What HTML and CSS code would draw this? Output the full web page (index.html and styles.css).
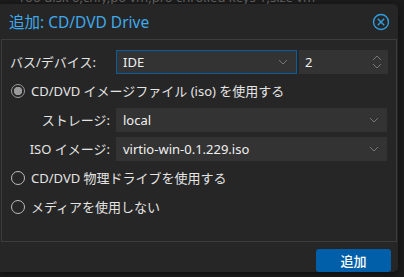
FILE: index.html
```html
<!DOCTYPE html>
<html lang="ja">

<head>
    <meta charset="UTF-8">
    <title>追加: CD/DVD Drive</title>
    <link rel="stylesheet" href="styles.css">
</head>

<body>
    <div class="backdrop"><div class="backdrop-text">roo disk 0,cnly,po vm,pro chrolled keys 1,size vm</div></div>
    <div class="dialog">
        <div class="header">
            <span class="title">追加: CD/DVD Drive</span>
            <span class="close">
                <svg width="18" height="18" viewBox="0 0 18 18">
                    <circle cx="9" cy="9" r="7.5" fill="none" stroke="#2f9fe0" stroke-width="1.4"/>
                    <path d="M5.8 5.8 L12.2 12.2 M12.2 5.8 L5.8 12.2" stroke="#2f9fe0" stroke-width="1.4"/>
                </svg>
            </span>
        </div>

        <div class="panel">
            <div class="row">
                <label class="label">バス/デバイス:</label>
                <div class="field select focused">
                    <span>IDE</span>
                    <svg class="chevron" width="10" height="6" viewBox="0 0 10 6"><path d="M1 1 L5 5 L9 1" fill="none" stroke="#777" stroke-width="1"/></svg>
                </div>
                <div class="field number">
                    <span>2</span>
                    <svg class="spin" width="10" height="16" viewBox="0 0 10 16"><path d="M1 6 L5 2 L9 6 M1 10 L5 14 L9 10" fill="none" stroke="#777" stroke-width="1"/></svg>
                </div>
            </div>

            <div class="radio-row">
                <span class="radio checked"></span>
                <span>CD/DVD イメージファイル (iso) を使用する</span>
            </div>

            <div class="row sub">
                <label class="label">ストレージ:</label>
                <div class="field select wide">
                    <span>local</span>
                    <svg class="chevron" width="10" height="6" viewBox="0 0 10 6"><path d="M1 1 L5 5 L9 1" fill="none" stroke="#777" stroke-width="1"/></svg>
                </div>
            </div>
            <div class="row sub">
                <label class="label">ISO イメージ:</label>
                <div class="field select wide">
                    <span>virtio-win-0.1.229.iso</span>
                    <svg class="chevron" width="10" height="6" viewBox="0 0 10 6"><path d="M1 1 L5 5 L9 1" fill="none" stroke="#777" stroke-width="1"/></svg>
                </div>
            </div>

            <div class="radio-row">
                <span class="radio"></span>
                <span>CD/DVD 物理ドライブを使用する</span>
            </div>
            <div class="radio-row">
                <span class="radio"></span>
                <span>メディアを使用しない</span>
            </div>
        </div>

        <div class="footer">
            <button class="add">追加</button>
        </div>
    </div>
</body>

</html>
```

FILE: styles.css
```css
body {
    margin: 0;
    background-color: #1b1b1b;
    font-family: "Noto Sans", "Noto Sans CJK JP", sans-serif;
    color: #e4e4e4;
    height: 277px;
    overflow: hidden;
}

.backdrop {
    height: 4px;
    overflow: hidden;
}

.backdrop-text {
    margin-top: -9px;
    font-size: 13px;
    line-height: 13px;
    color: #5e5e5e;
    padding-left: 20px;
    white-space: nowrap;
}

.dialog {
    width: 398px;
    height: 268px;
    background-color: #262626;
    border-radius: 0 5px 5px 0;
    box-shadow: 0 2px 6px rgba(0, 0, 0, 0.5);
    display: flex;
    flex-direction: column;
}

.header {
    height: 35px;
    display: flex;
    align-items: center;
    justify-content: space-between;
    padding: 0 8px 0 9px;
}

.title {
    color: #3fa9ea;
    font-size: 15.5px;
    margin-top: 1px;
}

.close {
    display: flex;
    margin-top: 1px;
}

.panel {
    margin: 0 1px;
    height: 193px;
    border: 1px solid #3c3c3c;
    padding: 10px 8px 0 8px;
    font-size: 13px;
}

.row {
    display: flex;
    align-items: center;
    height: 24px;
}

.row.sub {
    margin-top: 5px;
}

.label {
    width: 106px;
    flex-shrink: 0;
}

.sub .label {
    width: 100px;
    text-align: right;
    margin-right: 6px;
}

.field {
    height: 24px;
    box-sizing: border-box;
    background-color: #333333;
    display: flex;
    align-items: center;
    justify-content: space-between;
    padding: 0 8px 0 7px;
    color: #f0f0f0;
}

.select {
    width: 181px;
}

.select.focused {
    border: 1px solid #0b5e9c;
    padding-left: 6px;
}

.select.wide {
    width: 271px;
}

.number {
    width: 89px;
    margin-left: 2px;
    padding-left: 6px;
    padding-right: 6px;
}

.radio-row {
    display: flex;
    align-items: center;
    height: 24px;
    margin: 5px 0;
}

.radio {
    width: 14px;
    height: 14px;
    box-sizing: border-box;
    border: 1.5px solid #bdbdbd;
    border-radius: 50%;
    margin: 0 6px 0 1px;
    flex-shrink: 0;
}

.radio.checked {
    border-color: #9a9a9a;
    background: radial-gradient(circle, #9a9a9a 0 4px, #262626 4.5px);
}

.footer {
    flex: 1;
    display: flex;
    justify-content: flex-end;
    align-items: flex-start;
    padding: 7px 7px 0 0;
}

.add {
    width: 75px;
    height: 23px;
    border: none;
    border-radius: 3px;
    background-color: #005fa8;
    color: #ffffff;
    font-family: "Noto Sans CJK JP", sans-serif;
    font-size: 13px;
    font-weight: 500;
    padding: 0;
}
```
